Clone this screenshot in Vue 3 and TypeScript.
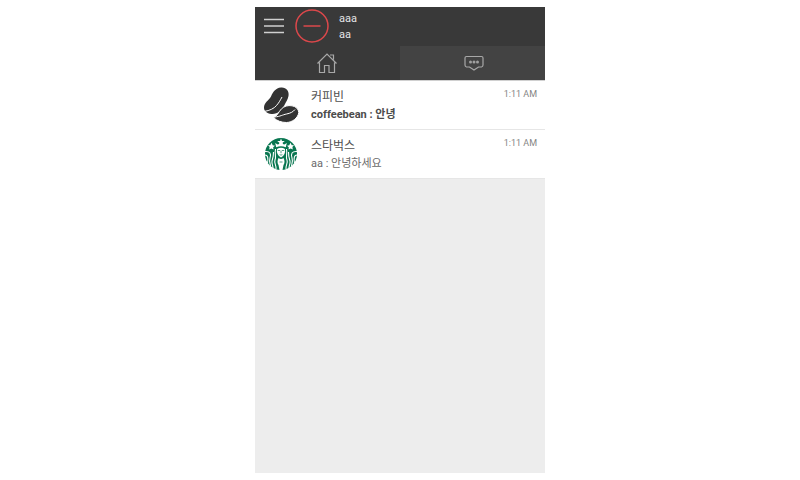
<script setup lang="ts">
import { ref } from 'vue'

interface Chat {
  id: string
  name: string
  message: string
  time: string
  unread: boolean
}

const chats: Chat[] = [
  { id: 'bean', name: '커피빈', message: 'coffeebean : 안녕', time: '1:11 AM', unread: true },
  { id: 'siren', name: '스타벅스', message: 'aa : 안녕하세요', time: '1:11 AM', unread: false },
]

const activeTab = ref<'home' | 'chat'>('chat')
</script>

<template>
  <main class="stage">
    <div class="app">
      <header class="bar">
        <button class="menu" type="button" aria-label="Menu">
          <svg viewBox="0 0 22 16" width="22" height="16">
            <path d="M1 1.500H21M1 8H21M1 14.500H21" />
          </svg>
        </button>
        <svg class="avatar" viewBox="0 0 34 34" width="34" height="34" aria-hidden="true">
          <circle cx="17" cy="17" r="16" />
          <path d="M8.500 17H25.500" />
        </svg>
        <div class="who">
          <span>aaa</span>
          <span>aa</span>
        </div>
      </header>

      <nav class="tabs">
        <button
          type="button"
          class="tab"
          :class="{ active: activeTab === 'home' }"
          aria-label="Home"
          @click="activeTab = 'home'"
        >
          <svg viewBox="0 0 22 22" width="22" height="22">
            <path d="M0.500 11.500L10 2L19.500 11.500M2.500 10.500V20.500H7.500V13.500H12V20.500H17.500V10.500M13 3H16.500V7.500" />
          </svg>
        </button>
        <button
          type="button"
          class="tab"
          :class="{ active: activeTab === 'chat' }"
          aria-label="Chats"
          @click="activeTab = 'chat'"
        >
          <svg viewBox="0 0 22 22" width="22" height="22">
            <path d="M4.500 4.500H19.500Q21 4.500 21 6V13Q21 14.500 19.500 15H16.500L12 18L7.500 15H4.500Q3 14.500 3 13V6Q3 4.500 4.500 4.500Z" />
            <g class="dots">
              <circle cx="8.500" cy="10" r="1.500" />
              <circle cx="12" cy="10" r="1.500" />
              <circle cx="15.500" cy="10" r="1.500" />
            </g>
          </svg>
        </button>
      </nav>

      <ul class="list">
        <li v-for="chat in chats" :key="chat.id" class="row">
          <svg v-if="chat.id === 'bean'" class="logo" viewBox="0 0 36 36" width="36" height="36" aria-hidden="true">
            <path fill="#333" d="M18 0.500C23 0 26.500 4 25.500 9C24.800 12.500 23 15 21.500 18C19 23 14.500 27.500 8.500 27C3.500 26.500 0.800 24 1 20C1.500 15.500 5.500 13.500 8 9.500C10 5 12.500 1 18 0.500Z" />
            <path fill="none" stroke="#fff" stroke-width="1" d="M1 24.500C7 23.500 11 21.500 13.500 18.500C16.500 15 17 13.500 19 10" />
            <path fill="#333" stroke="#fff" stroke-width="1" d="M10.500 30.500C14 29.500 15.500 25 18.500 21.800C21 19.300 25 18 29 18.800C33 19.500 35.500 22 35.800 25.500C35 31 29.500 35.300 23.500 35.500C18.500 35.500 14 34 10.500 30.500Z" />
            <path fill="none" stroke="#fff" stroke-width="1" d="M11.500 30C17.500 29.500 19.500 27.800 23.500 27C27.500 26.200 30 25 32 22.500" />
          </svg>
          <svg v-else class="logo" viewBox="0 0 36 36" width="36" height="36" aria-hidden="true">
            <circle cx="18" cy="18" r="16" fill="#087650" />
            <g fill="#fff">
              <path d="M18 2.500L19 5L21.800 5.100L19.600 6.800L20.400 9.400L18 7.900L15.600 9.400L16.400 6.800L14.200 5.100L17 5Z" />
              <path d="M12.200 7L14.600 8.600L18 7.500L21.400 8.600L23.800 7L22.800 11.200Q18 9.200 13.200 11.200Z" />
              <path d="M5 9L7.200 9.200L8.600 6.800L9.700 9.200L12 9.700L10.200 11.200L10.500 13.600L8.300 12.400L6.200 13.400L6.600 11Z" />
              <path d="M31 9L28.800 9.200L27.400 6.800L26.300 9.200L24 9.700L25.800 11.200L25.500 13.600L27.700 12.400L29.800 13.400L29.400 11Z" />
              <path d="M14 13Q18 10.500 22 13Q22.800 19 18 21.500Q13.200 19 14 13Z" />
              <path d="M15.500 22Q18 24 20.500 22Q22.500 26 20.500 29L19.500 34H16.500L15.500 29Q13.500 26 15.500 22Z" />
            </g>
            <g fill="none" stroke="#fff" stroke-width="1.100">
              <path d="M12.500 13C11.500 19 13.500 20 12 24C10.800 27 13.500 29 13 33" />
              <path d="M10.500 16C10.500 21 10 22 9 25C8.500 28 10 29 10 32" />
              <path d="M2 15.500C7 15 8.500 18 7 22C6 25 7 27 7.500 30" />
              <path d="M2 19Q6 19 4.500 27" />
              <path d="M23.500 13C24.500 19 22.500 20 24 24C25.200 27 22.500 29 23 33" />
              <path d="M25.500 16C25.500 21 26 22 27 25C27.500 28 26 29 26 32" />
              <path d="M34 15.500C29 15 27.500 18 29 22C30 25 29 27 28.500 30" />
              <path d="M34 19Q30 19 31.500 27" />
            </g>
            <path fill="none" stroke="#087650" stroke-width=".7" d="M14.800 14.500H17M19 14.500H21.200M18 14.500V17.200M16.600 18.700Q18 19.500 19.400 18.700M16.500 26H19.500" />
          </svg>
          <div class="text">
            <span class="name">{{ chat.name }}</span>
            <span class="message" :class="{ unread: chat.unread }">{{ chat.message }}</span>
          </div>
          <time class="time">{{ chat.time }}</time>
        </li>
      </ul>
    </div>
  </main>
</template>

<style>
body {
  background: #fff;
}
</style>

<style scoped>
.stage {
  box-sizing: border-box;
  min-height: 100vh;
  padding: 7px 0;
  display: flex;
  justify-content: center;
  font-family: Roboto, "Noto Sans CJK KR", sans-serif;
}

.app {
  flex: 0 1 290px;
  background: #ededed;
}

button {
  margin: 0;
  padding: 0;
  border: 0;
  background: none;
  cursor: pointer;
}

svg {
  display: block;
}

.bar {
  box-sizing: border-box;
  display: flex;
  align-items: center;
  height: 39px;
  padding: 0 8px 2px;
  background: #393939;
}

.menu path {
  stroke: #d0d0d0;
  stroke-width: 1.500;
}

.avatar {
  margin-left: 10px;
  fill: none;
  stroke: #dc484b;
  stroke-width: 1.500;
}

.who {
  display: flex;
  flex-direction: column;
  margin-left: 10px;
  padding-top: 2px;
  color: #e6e6e6;
  font-size: 11px;
  line-height: 16px;
}

.tabs {
  display: grid;
  grid-template-columns: 1fr 1fr;
  height: 34px;
  background: #393939;
}

.tab {
  display: flex;
  align-items: center;
  justify-content: center;
}

.tab.active {
  background: #434343;
}

.tab svg {
  fill: none;
  stroke: #a8a8a8;
  stroke-width: 1.200;
}

.tab .dots {
  fill: #a0a0a0;
  stroke: none;
}

.list {
  margin: 0;
  padding: 0;
  border-top: 1px solid #d0d0d0;
  list-style: none;
}

.row {
  box-sizing: border-box;
  display: flex;
  align-items: flex-start;
  height: 49px;
  padding: 6px 8px;
  border-bottom: 1px solid #e6e6e6;
  background: #fff;
}

.text {
  flex: 1;
  display: flex;
  flex-direction: column;
  margin-left: 12px;
  padding-top: 1px;
}

.name {
  color: #505050;
  font-size: 12px;
  line-height: 18px;
}

.message {
  color: #6a6a6a;
  font-size: 11px;
  line-height: 18px;
}

.message.unread {
  color: #4c4c4c;
  font-weight: 700;
}

.time {
  color: #858585;
  font-size: 9px;
  line-height: 15px;
}
</style>
